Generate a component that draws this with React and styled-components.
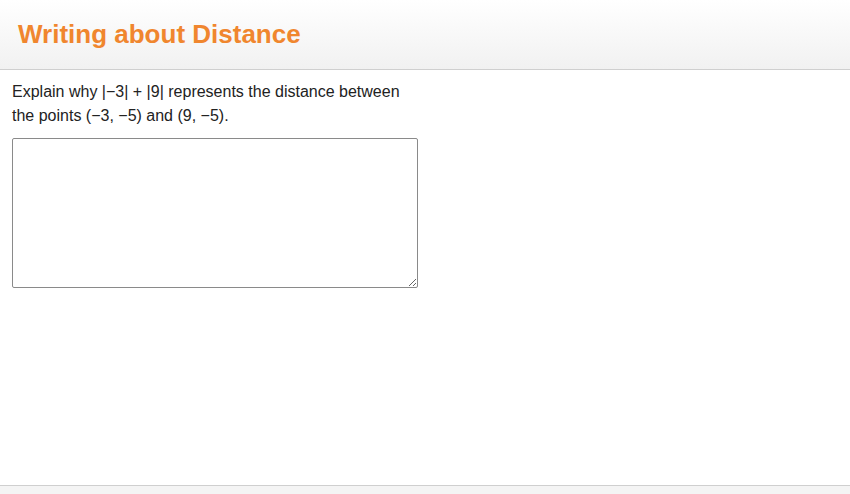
import React from "react";
import styled, { createGlobalStyle } from "styled-components";

const Global = createGlobalStyle`
  html, body {
    margin: 0;
    padding: 0;
    height: 100%;
    background: #fff;
    font-family: "Liberation Sans", Arial, sans-serif;
  }
  #root {
    height: 100%;
  }
`;

function App() {
  return (
    <>
      <Global />
      <Page>
        <Header>
          <Title>Writing about Distance</Title>
        </Header>
        <Content>
          <Prompt>
            Explain why |−3| + |9| represents the distance between
            <br />
            the points (−3, −5) and (9, −5).
          </Prompt>
          <Answer />
        </Content>
        <Footer />
      </Page>
    </>
  );
}

const Page = styled.div`
  display: flex;
  flex-direction: column;
  height: 494px;
`;

const Header = styled.header`
  height: 70px;
  box-sizing: border-box;
  display: flex;
  align-items: center;
  padding-left: 18px;
  background: linear-gradient(#ffffff, #f1f1f1);
  border-bottom: 1px solid #cfcfcf;
`;

const Title = styled.h1`
  margin: 0;
  font-size: 26px;
  font-weight: 700;
  color: #f0862e;
`;

const Content = styled.main`
  flex: 1;
  padding: 10px 12px 0;
`;

const Prompt = styled.p`
  margin: 0 0 10px;
  font-size: 16px;
  line-height: 24px;
  color: #222;
`;

const Answer = styled.textarea`
  display: block;
  width: 406px;
  height: 150px;
  box-sizing: border-box;
  border: 1px solid #8a8a8a;
  border-radius: 2px;
  resize: vertical;
`;

const Footer = styled.footer`
  height: 8px;
  background: #f4f4f4;
  border-top: 1px solid #cfcfcf;
`;

export default App;
